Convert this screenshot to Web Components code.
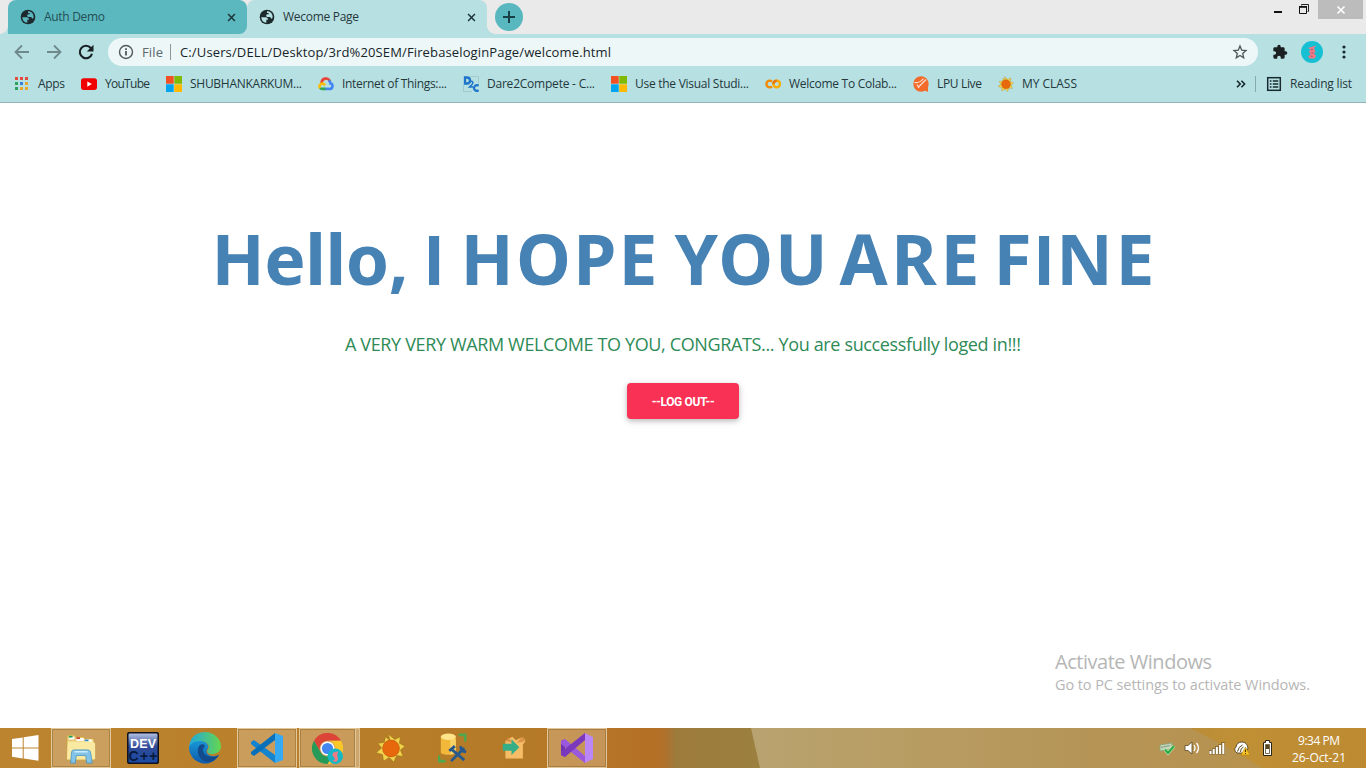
<!DOCTYPE html>
<html lang="en"><head><meta charset="utf-8"><title>Wecome Page</title>
<style>html,body{margin:0;height:100%;overflow:hidden;background:#fff;font-family:"Open Sans","Noto Sans",sans-serif}</style></head>
<body>
<desktop-screen></desktop-screen>
<script>
const define=(name,html,setup)=>customElements.define(name,class extends HTMLElement{
  constructor(){super();const t=document.createElement('template');t.innerHTML=html;
    this.attachShadow({mode:'open'}).appendChild(t.content.cloneNode(true));}
  connectedCallback(){if(setup)setup.call(this,this.shadowRoot);}
});
const ms='<path fill="#f25022" d="M0 0h7.7v7.7H0z"/><path fill="#7fba00" d="M8.3 0H16v7.7H8.3z"/><path fill="#00a4ef" d="M0 8.3h7.7V16H0z"/><path fill="#ffb900" d="M8.3 8.3H16V16H8.3z"/>';
const ICONS={
 globe:['0 0 24 24','<circle cx="12" cy="12" r="11" fill="#1d2a2d"/><path fill="var(--hole,#fff)" d="M3.500 12.500h6.500c2.500 0 3.500 1.500 3.500 3.500h-2.500v4.500C6.500 20.500 3.500 17 3.500 12.500zM12 3.500c5 0 8.500 3.500 8.500 8.500l-1 2.500c-1.500 0-2-1-2.500-2.500h-4.500c-2 0-2.500-3.500 0-4h2V6H12z"/>'],
 close:['0 0 10 10','<path d="M1.200 1.200l7.600 7.600M8.800 1.200L1.200 8.800" stroke="#1d3438" stroke-width="1.700"/>'],
 plus:['0 0 14 14','<path d="M7 1v12M1 7h12" stroke="#173f45" stroke-width="2"/>'],
 back:['0 0 16 16','<path d="M15 8H2M8 1.500L1.500 8 8 14.500" fill="none" stroke="#70898c" stroke-width="1.800"/>'],
 fwd:['0 0 16 16','<path d="M1 8h13M8 1.500L14.500 8 8 14.500" fill="none" stroke="#70898c" stroke-width="1.800"/>'],
 reload:['0 0 16 16','<path d="M12.800 4A6.200 6.200 0 1 0 14 9.700" fill="none" stroke="#172023" stroke-width="2.100"/><path d="M15.500.800v6.700H8.800z" fill="#172023"/>'],
 info:['0 0 16 16','<circle cx="8" cy="8" r="6.500" fill="none" stroke="#52595b" stroke-width="1.400"/><path d="M8 7v4.500M8 4.200v1.700" stroke="#52595b" stroke-width="1.800"/>'],
 star:['0 0 16 16','<path d="M8 2l1.700 4.100 4.300.4-3.300 2.900 1 4.400L8 11.400l-3.700 2.400 1-4.400L2 6.500l4.300-.4z" fill="none" stroke="#4c5759" stroke-width="1.300"/>'],
 puzzle:['0 0 24 24','<path fill="#1a2022" d="M20.500 11H19V7c0-1.100-.9-2-2-2h-4V3.500a2.500 2.500 0 0 0-5 0V5H4c-1.100 0-2 .9-2 2v3.800h1.500a2.700 2.700 0 0 1 0 5.400H2V20c0 1.100.9 2 2 2h3.800v-1.500a2.700 2.700 0 0 1 5.400 0V22H17c1.100 0 2-.9 2-2v-4h1.500a2.500 2.500 0 0 0 0-5z"/>'],
 avatar:['0 0 22 22','<circle cx="11" cy="11" r="11" fill="#16c0d3"/><path d="M7 7l3-1 5-1.500-2 2.500 1.500 4-1.500 1 2 3-1.500 2.500H8.500l-1.500-2 2.500-2-1.500-3 1.500-2z" fill="#ef7887"/><path d="M10 8.500l2 0M10.500 11.500l2 1M9.500 15l2 .5" stroke="#7d5264" stroke-width=".7"/>'],
 dots:['0 0 16 16','<g fill="#172a2d"><circle cx="8" cy="3" r="1.600"/><circle cx="8" cy="8" r="1.600"/><circle cx="8" cy="13" r="1.600"/></g>'],
 apps:['0 0 16 16','<g><path fill="#e24a3b" d="M1 1h3v3H1zM6 1h3v3H6zM11 1h3v3h-3z"/><path fill="#2da05a" d="M1 6h3v3H1zM1 11h3v3H1z"/><path fill="#3880d8" d="M6 6h3v3H6z"/><path fill="#e8a62d" d="M11 6h3v3h-3zM6 11h3v3H6zM11 11h3v3h-3z"/></g>'],
 youtube:['0 0 16 16','<rect y="2.300" width="16" height="11.600" rx="2.600" fill="#f00000"/><path fill="#fff" d="M6.300 5.500l4.500 2.600-4.500 2.600z"/>'],
 ms:['0 0 16 16',ms],
 cloud:['0 0 16 16','<g fill="none" stroke-width="2.600"><path d="M3.500 7C3.800 1.800 10 1 12 5.500" stroke="#ea4335"/><path d="M10.500 4.500c1.500.7 2 2 2 3 2.500.2 3 5-.5 5.400" stroke="#4285f4"/><path d="M12.500 12.900H6.500" stroke="#4285f4"/><path d="M7.500 12.900H4.200c-1 0-1.800-.4-2.300-1" stroke="#34a853"/><path d="M2 12.100C.6 10 2 7.600 4.500 7.600c1 0 2 .8 2.800 1.600" stroke="#fbbc05"/></g>'],
 d2c:['0 0 16 16','<path d="M7 .5h8.500V9M.5 8v7.500H9" fill="none" stroke="#9fcbd0"/><g fill="none" stroke="#1d74c9"><path d="M2 1.500h2c4 0 4 6 0 6H2z" stroke-width="2.300"/><path d="M6.500 6c3-2 4.500.5 2.500 2.500L6.500 11H10" stroke-width="1.500"/><path d="M15.500 9.800c-2-1.500-4.500-.2-4.500 2.200s2.500 3.800 4.500 2.200" stroke-width="2.300"/></g>'],
 colab:['0 0 16 16','<g fill="none" stroke-width="2.400"><circle cx="11.700" cy="8" r="3.300" stroke="#f9ab00"/><path d="M7 5.600a3.300 3.300 0 1 0 0 4.800" stroke="#f28a00"/><path d="M8.400 8a3.300 3.300 0 0 1 3.300-3.300" stroke="#e8710a"/></g>'],
 lpu:['0 0 16 16','<circle cx="8" cy="8" r="7.700" fill="#f26b2b"/><path d="M9 13l6 3v-7z" fill="#f26b2b"/><path d="M1.500 6.500q5 1 9-4M5 11.500l8-8M4 8.500l2 3.500" fill="none" stroke="#f9dfd1" stroke-width="1.200"/>'],
 sun:['0 0 32 32','<path fill="#f1d44c" stroke="#9c7715" stroke-width=".6" d="M15 8L13 1l7 6 6-3-1 7 6 3-5 4 3 7-7-1-3 7-5-5-6 4-1-7-7-2 6-5-4-5 7-1 1-6z"/><circle cx="16" cy="16.500" r="9" fill="#e8680e" stroke="#b7510b" stroke-width=".6"/>'],
 chev:['0 0 10 10','<path d="M1 1.800L4.200 5 1 8.200M5.400 1.800L8.600 5 5.400 8.200" fill="none" stroke="#17282b" stroke-width="1.600"/>'],
 list:['0 0 16 16','<rect x="1.700" y="1.700" width="12.600" height="12.600" fill="none" stroke="#172b2e" stroke-width="1.500"/><path d="M3.800 5h1.700M3.800 8h1.700M3.800 11h1.700M6.800 5h5.500M6.800 8h5.500M6.800 11h5.500" stroke="#172b2e" stroke-width="1.500"/>'],
 min:['0 0 10 10','<path d="M1 8h8" stroke="#111" stroke-width="2"/>'],
 restore:['0 0 12 12','<path d="M3.500 2.500V1.500h7v7H9.500" fill="none" stroke="#222"/><path d="M1.500 3.500h7v7h-7z" fill="none" stroke="#111"/><path d="M1 4h8" stroke="#111" stroke-width="1.600"/>'],
 wclose:['0 0 10 10','<path d="M1.500 1.500l7 7M8.500 1.500l-7 7" stroke="#fff" stroke-width="1.700"/>'],
 windows:['0 0 28 28','<path fill="#fff" d="M1 5l10.700-1.600v10H1zM12.700 3.200L27.500 1v12.400H12.700zM1 14.400h10.700v10L1 22.800zM12.700 14.400h14.800v12.400l-14.800-2.200z"/>'],
 folder:['0 0 34 34','<path d="M2 5l2-2h6l1 2h9l1 2h9l1 2v21H2z" fill="#e9ca73" stroke="#c69b3b" stroke-width=".7"/><path d="M4 5h6v3H4zM12 6.500h8v3h-8zM21 8h8v3h-8z" fill="#fff"/><path fill="#23a455" d="M4 4h4v2H4z"/><path fill="#cf493b" d="M12 5.500h4v2h-4z"/><path fill="#318cc6" d="M21 8h4v2h-4z"/><path d="M3 10h26l3 2v17H2z" fill="#fae9a0"/><path d="M6 33l1-12q.3-2 3-2h14q2.700 0 3 2l2 12h-6l-1-8H12l-1 8z" fill="#82c3e7" stroke="#3f91c4" stroke-width=".8"/><path d="M10 21h14" stroke="#d4f0fb" stroke-width="1.500"/>'],
 dev:['0 0 32 32','<defs><linearGradient id="g" x2="0" y2="1"><stop stop-color="#b9c7e8"/><stop offset=".45" stop-color="#314a95"/><stop offset="1" stop-color="#194aa8"/></linearGradient></defs><rect x=".7" y=".7" width="30.600" height="30.600" rx="2" fill="url(#g)" stroke="#10131d" stroke-width="1.600"/><text x="16" y="15.500" font-family="Liberation Sans" font-weight="700" font-size="12.500" text-anchor="middle" fill="#fff" textLength="26">DEV</text><text x="16" y="29" font-family="Liberation Sans" font-weight="700" font-size="14" text-anchor="middle" fill="#081a3c" textLength="29">C++</text>'],
 edge:['0 0 32 32','<defs><linearGradient id="a" x2="1"><stop stop-color="#20a8dc"/><stop offset="1" stop-color="#66d64e"/></linearGradient><linearGradient id="b" x2="0" y2="1"><stop stop-color="#1797d8"/><stop offset="1" stop-color="#105aa8"/></linearGradient></defs><path fill="url(#b)" d="M0 15C2 9 8 8 12 9c5 0 8 4 7 7-1 2-2 3-1 5 2 4 8 4 12 2-4 7-11 10-18 8S0 23 0 15z"/><path fill="#124a8c" d="M11 13c-5 5-1 17 9 17 5-1 8-4 10-7-8 4-16 1-16-5 0-2 1-3 2-4-1-2-3-2-5-1z"/><path fill="url(#a)" d="M0 15C1 5 8 0 16 0c9 0 16 7 16 14 0 6-5 8-9 8-3 0-6-2-4-4 3-5-2-9-7-9-6 0-10 2-12 6z"/>'],
 code:['0 0 32 32','<path fill="#1584cf" d="M0 10l3-2 21 15v8L0 12z"/><path fill="#0870b8" d="M0 22l3 2L24 8V1L0 20z"/><path fill="#35aaf2" d="M24 1l8 3v24l-8 3z"/>'],
 chrome:['0 0 32 32','<path fill="#dc4437" d="M2.100 8A16 16 0 0 1 29.900 8H16a8 8 0 0 0-7 12z"/><path fill="#fbc927" d="M29.900 8A16 16 0 0 1 16 32l7-12a8 8 0 0 0-7-12z"/><path fill="#269b57" d="M2.100 8A16 16 0 0 0 16 32l7-12a8 8 0 0 1-14 0z"/><circle cx="16" cy="16" r="7.300" fill="#fff"/><circle cx="16" cy="16" r="5.800" fill="#4287ef"/><circle cx="24" cy="24" r="8" fill="#18b6c5"/><path d="M22 20l5-1-1 4 1 4-2 3-4-1 3-2-3-4z" fill="#ee7a86"/>'],
 db:['0 0 32 32','<path d="M3 4v17c3 3 13 3 16 0V4z" fill="#f2b83a"/><path d="M13 6h6v15q-3 2-6 2z" fill="#f8d467"/><ellipse cx="11" cy="4" rx="8" ry="3.400" fill="#ffe48a"/><path d="M22 2h7v7M1 24v6h7" fill="none" stroke="#50a64d" stroke-width="2.800"/><path d="M14 17l14 12M28 16L14 30" stroke="#28598d" stroke-width="3"/><path d="M12 19l6-5M24 14l1 5 5 1" stroke="#28598d" stroke-width="3" fill="none"/>'],
 exportbox:['0 0 32 32','<path d="M5 8l8-5 4 4 6-3 5 4-3 4v16H5z" fill="#f6bd68"/><path d="M25 9l3-3-4-3-6 7zM5 8l4-4 4 6z" fill="#dc9447"/><path d="M2 11h10V6l9 9-9 9v-5H2z" fill="#35ae87"/>'],
 vs:['0 0 32 32','<path fill="#7134b5" d="M0 9l4-2v18l-4-2z"/><path fill="#9a58dd" d="M0 9l4-2 20 17v7L0 12z"/><path fill="#7c38bd" d="M0 23l4 2L24 8V1L0 20z"/><path fill="#bb86f5" d="M24 1l8 4v22l-8 4z"/>'],
 usb:['0 0 16 16','<path d="M1 5l12-2v6L1 11z" fill="#c3d6b8" stroke="#87a57f" stroke-width=".8"/><path d="M2 7.500l9-2" stroke="#879d88"/><path d="M6 9.500l3 3.500 6-7" fill="none" stroke="#d5f5d0" stroke-width="3.200"/><path d="M6 9.500l3 3.500 6-7" fill="none" stroke="#2cab43" stroke-width="2.200"/>'],
 volume:['0 0 16 16','<path d="M1 5.500h3L8 2v12l-4-3.500H1z" fill="#fff" stroke="#57482a" stroke-width=".8"/><path d="M10 5q2 3 0 6M12.500 3q4 5 0 10" fill="none" stroke="#fff" stroke-width="1.300"/>'],
 signal:['0 0 16 16','<path fill="#4f3e1c" d="M0 10h3V8h3V6h3.500V4H12V2h4v12.500H0z" opacity=".45"/><path fill="#fff" d="M.5 11h2v3h-2zM3.700 9h2v5h-2zM6.900 7h2v7h-2zM10.100 5h2v9h-2zM13.300 3h2v11h-2z"/>'],
 cloudwarn:['0 0 16 16','<path d="M3 13Q-1 10 2 7 3 2 8 2q5 0 6 6l-2 5z" fill="#fff" stroke="#40341e" stroke-width=".8"/><path d="M3.500 11.500q1-5 5-6.500M6.500 12q0-4 3-5" fill="none" stroke="#594722"/><path d="M11.500 7l4.500 8H7z" fill="#f4c321" stroke="#a97809" stroke-width=".5"/><path d="M11.500 9.500v2.500M11.500 13v1" stroke="#473100"/>'],
 battery:['0 0 16 16','<path d="M6.500.5h4v2h2v13h-8v-13h2z" fill="#fff" stroke="#2c2414"/><path d="M6.200 4.200h4.600v9.600H6.200z" fill="#55441f"/><path d="M7 9h3v4H7z" fill="#fff"/>']
};
define('ui-icon','<style>:host{display:block;flex:none;width:var(--s,16px);height:var(--s,16px)}svg{display:block;width:100%;height:100%}</style><svg></svg>',function(r){
  const i=ICONS[this.getAttribute('name')],s=r.querySelector('svg');s.setAttribute('viewBox',i[0]);s.innerHTML=i[1];
  const z=this.getAttribute('size');if(z)this.style.setProperty('--s',z+'px');});
/* text run whose tracking is adjusted to a set measure */
define('fit-text','<style>:host{display:block;flex:none;white-space:nowrap}span{display:inline-block}</style><span><slot></slot></span>',function(r){
  const w=+this.getAttribute('w'),s=r.querySelector('span'),n=[...this.textContent].length;
  this.style.width=w+'px';if(n<2)return;const d=(w-s.getBoundingClientRect().width)/(n-1);s.style.letterSpacing=d+'px';});
define('browser-tab',`<style>:host{display:flex;align-items:center;box-sizing:border-box;width:240px;height:34px;padding:0 11px 0 12px;background:#b7e0e3;border-radius:8px 8px 0 0;font-size:12px;color:#26383b;--hole:#b7e0e3}
:host([idle]){width:239px;background:#5bb8bf;color:#234f54;--hole:#5bb8bf;border-radius:8px 8px 8px 0}
slot{display:block;margin:-1px 0 0 8px}.x{margin-left:auto}</style><ui-icon name="globe" size="16"></ui-icon><slot></slot><ui-icon class="x" name="close" size="9"></ui-icon>`);
define('tab-strip',`<style>:host{display:flex;height:34px;background:#eaeaea}.edge,.r{width:8px;background:radial-gradient(circle at 0 0,#eaeaea 7.500px,#b7e0e3 8px) bottom/8px 8px no-repeat}
.under{display:flex;background:linear-gradient(#eaeaea 10px,#b7e0e3 10px)}.r{background-image:radial-gradient(circle at 100% 0,#eaeaea 7.500px,#b7e0e3 8px)}.add{width:28px;height:28px;border-radius:50%;background:#59b8bf;margin-top:3px;display:grid;place-items:center}
.win{margin-left:auto;display:flex;align-items:flex-start}.win ui-icon{margin-top:4px}.c{width:45px;height:19px;margin-right:3px;background:#bcbcbc;display:grid;place-items:center}.win .c ui-icon{margin:0}</style>
<div class="edge"></div><div class="under"><browser-tab idle><fit-text w="61">Auth Demo</fit-text></browser-tab><browser-tab><fit-text w="76">Wecome Page</fit-text></browser-tab></div><div class="r"></div><div class="add"><ui-icon name="plus" size="14"></ui-icon></div>
<div class="win"><ui-icon name="min" size="10" style="margin-right:15px"></ui-icon><ui-icon name="restore" size="12" style="margin-right:8px;margin-top:3px"></ui-icon><div class="c"><ui-icon name="wclose" size="10"></ui-icon></div></div>`);
define('address-bar',`<style>:host{display:flex;align-items:center;height:36px;background:#b7e0e3;padding:0 0 0 14px;font-size:13px;color:#172528}
.f{display:flex;flex:none;align-items:center;height:28px;width:1150px;box-sizing:border-box;margin-left:14px;border-radius:14px;background:#edf7f8;padding:0 10px}.file{color:#5c686a;margin-left:8px}.sep{width:1px;height:16px;background:#8b9799;margin:0 9px 0 7px}.star{margin-left:auto}</style>
<ui-icon name="back"></ui-icon><ui-icon name="fwd" style="margin-left:16px"></ui-icon><ui-icon name="reload" style="margin-left:16px"></ui-icon>
<div class="f"><ui-icon name="info"></ui-icon><fit-text class="file" w="21">File</fit-text><i class="sep"></i><fit-text w="431">C:/Users/DELL/Desktop/3rd%20SEM/FirebaseloginPage/welcome.html</fit-text><ui-icon class="star" name="star"></ui-icon></div>
<ui-icon name="puzzle" style="margin-left:14px"></ui-icon><ui-icon name="avatar" size="22" style="margin-left:13px"></ui-icon><ui-icon name="dots" size="16" style="margin-left:13px"></ui-icon>`);
define('bookmark-item',`<style>:host{display:flex;align-items:center;gap:8px;flex:none}fit-text{margin-top:-1px}</style>`,function(r){
 r.innerHTML+=`<ui-icon name="${this.getAttribute('icon')}"></ui-icon><fit-text w="${this.getAttribute('w')}">${this.getAttribute('label')}</fit-text>`;});
define('bookmark-bar',`<style>:host{display:flex;align-items:center;gap:16px;height:33px;box-sizing:border-box;background:#b7e0e3;border-bottom:1px solid #91b3b6;padding:0 14px 4px;font-size:12px;color:#24383b}.m{margin-left:auto;display:flex;align-items:center}.s{width:1px;height:16px;background:#85a9ac;margin:0 10px 0 9px}</style>
<bookmark-item icon="apps" w="27" label="Apps"></bookmark-item><bookmark-item icon="youtube" w="45" label="YouTube"></bookmark-item><bookmark-item icon="ms" w="112" label="SHUBHANKARKUM..."></bookmark-item><bookmark-item icon="cloud" w="105" label="Internet of Things:..."></bookmark-item><bookmark-item icon="d2c" w="108" label="Dare2Compete - C..."></bookmark-item><bookmark-item icon="ms" w="114" label="Use the Visual Studi..."></bookmark-item><bookmark-item icon="colab" w="108" label="Welcome To Colab..."></bookmark-item><bookmark-item icon="lpu" w="45" label="LPU Live"></bookmark-item><bookmark-item icon="sun" w="55" label="MY CLASS"></bookmark-item>
<div class="m"><ui-icon name="chev" size="10"></ui-icon><i class="s"></i><bookmark-item icon="list" w="62" label="Reading list"></bookmark-item></div>`);
define('logout-button',`<style>:host{display:block}button{display:grid;place-items:center;width:112px;height:36px;border:0;border-radius:4px;padding:2px 0 0;background:#f93154;color:#fff;font:700 12px Roboto,sans-serif;box-shadow:0 2px 5px #0003,0 2px 10px #0000001a}</style><button><slot></slot></button>`);
define('welcome-page',`<style>:host{display:flex;flex-direction:column;align-items:center;flex:1;background:#fff;position:relative}
h1{display:flex;align-items:baseline;margin:108px 0 0;font:700 69.500px/94px "Noto Sans","Open Sans",sans-serif;color:#4682b4}h1 span{font-family:Inter,sans-serif;font-size:68px;line-height:1}p{margin:26px 0 0;font-size:18px;line-height:26px;color:#2e8b57}logout-button{margin-top:26px}
.w{position:absolute;left:1055px;top:545px;color:#b6b6b6}.a{font-size:20px;line-height:28px}.b{font-size:14.500px;line-height:18px}</style>
<h1><fit-text w="197">Hello,</fit-text> <fit-text w="20" style="margin:0 16px"><span>I</span></fit-text> <fit-text w="197">HOPE</fit-text> <fit-text w="153" style="margin:0 12px 0 17px">YOU</fit-text> <fit-text w="140">ARE</fit-text> <fit-text w="161" style="margin-left:14px">F<span>I</span>NE</fit-text></h1><p><fit-text w="676">A VERY VERY WARM WELCOME TO YOU, CONGRATS... You are successfully loged in!!!</fit-text></p><logout-button><fit-text w="63">--LOG OUT--</fit-text></logout-button>
<div class="w"><fit-text class="a" w="157">Activate Windows</fit-text><fit-text class="b" w="255">Go to PC settings to activate Windows.</fit-text></div>`);
define('task-button',`<style>:host{width:62px;height:40px;display:flex;align-items:center;justify-content:center;box-sizing:border-box;padding:0 1px}div{width:100%;height:40px;box-sizing:border-box;display:grid;place-items:center}:host([open]) div{background:#ffffff3b;border:1px solid #eddbb5b0;outline:1px solid #7b551d60;outline-offset:-2px}i{display:none}:host([stack]) i{display:block;box-sizing:border-box;flex:none;width:4px;height:40px;background:#ffffff50;border:1px solid #e4cda0b0;border-left:0}:host([stack]){padding:0 0 0 1px}</style><div><slot></slot></div><i></i>`);
define('task-bar',`<style>:host{position:relative;isolation:isolate;display:flex;align-items:center;height:40px;color:#fff;background:linear-gradient(90deg,#bd8430 0,#b97f2b 300px,#b57a27 530px,#b47026 660px,#ab7230 668px,#9d7b3b 676px,#9b803f 760px)}
:host::before,:host::after{content:"";position:absolute;inset:0;z-index:-1}:host::before{background:linear-gradient(90deg,#b8a26f 752px,#b89e65 880px,#b59456 1100px,#b99149 1366px);clip-path:polygon(751px 0,100% 0,100% 100%,760px 100%)}:host::after{background:linear-gradient(90deg,#b98d38 1190px,#c09035 1240px,#bd8a32 1366px);clip-path:polygon(1190px 0,100% 0,100% 100%,1262px 100%,1225px 18px)}
.start{width:50px;display:grid;place-items:center}.tray{display:flex;align-items:center;margin-left:auto;gap:9px}.clock{display:grid;justify-items:center;width:56px;margin:2px 19px 0 7px;font-size:12px;line-height:17px}</style>
<div class="start"><ui-icon name="windows" size="28"></ui-icon></div>
<task-button open><ui-icon name="folder" size="32"></ui-icon></task-button><task-button><ui-icon name="dev" size="32"></ui-icon></task-button><task-button><ui-icon name="edge" size="32"></ui-icon></task-button><task-button open><ui-icon name="code" size="32"></ui-icon></task-button><task-button open stack><ui-icon name="chrome" size="31"></ui-icon></task-button><task-button><ui-icon name="sun" size="30"></ui-icon></task-button><task-button><ui-icon name="db" size="30"></ui-icon></task-button><task-button><ui-icon name="exportbox" size="28"></ui-icon></task-button><task-button open><ui-icon name="vs" size="32"></ui-icon></task-button>
<div class="tray"><ui-icon name="usb"></ui-icon><ui-icon name="volume"></ui-icon><ui-icon name="signal"></ui-icon><ui-icon name="cloudwarn"></ui-icon><ui-icon name="battery"></ui-icon><div class="clock"><fit-text w="42">9:34 PM</fit-text><fit-text w="54">26-Oct-21</fit-text></div></div>`);
define('desktop-screen',`<style>:host{display:flex;flex-direction:column;width:1366px;height:768px;overflow:hidden}</style><tab-strip></tab-strip><address-bar></address-bar><bookmark-bar></bookmark-bar><welcome-page></welcome-page><task-bar></task-bar>`);
</script></body></html>
